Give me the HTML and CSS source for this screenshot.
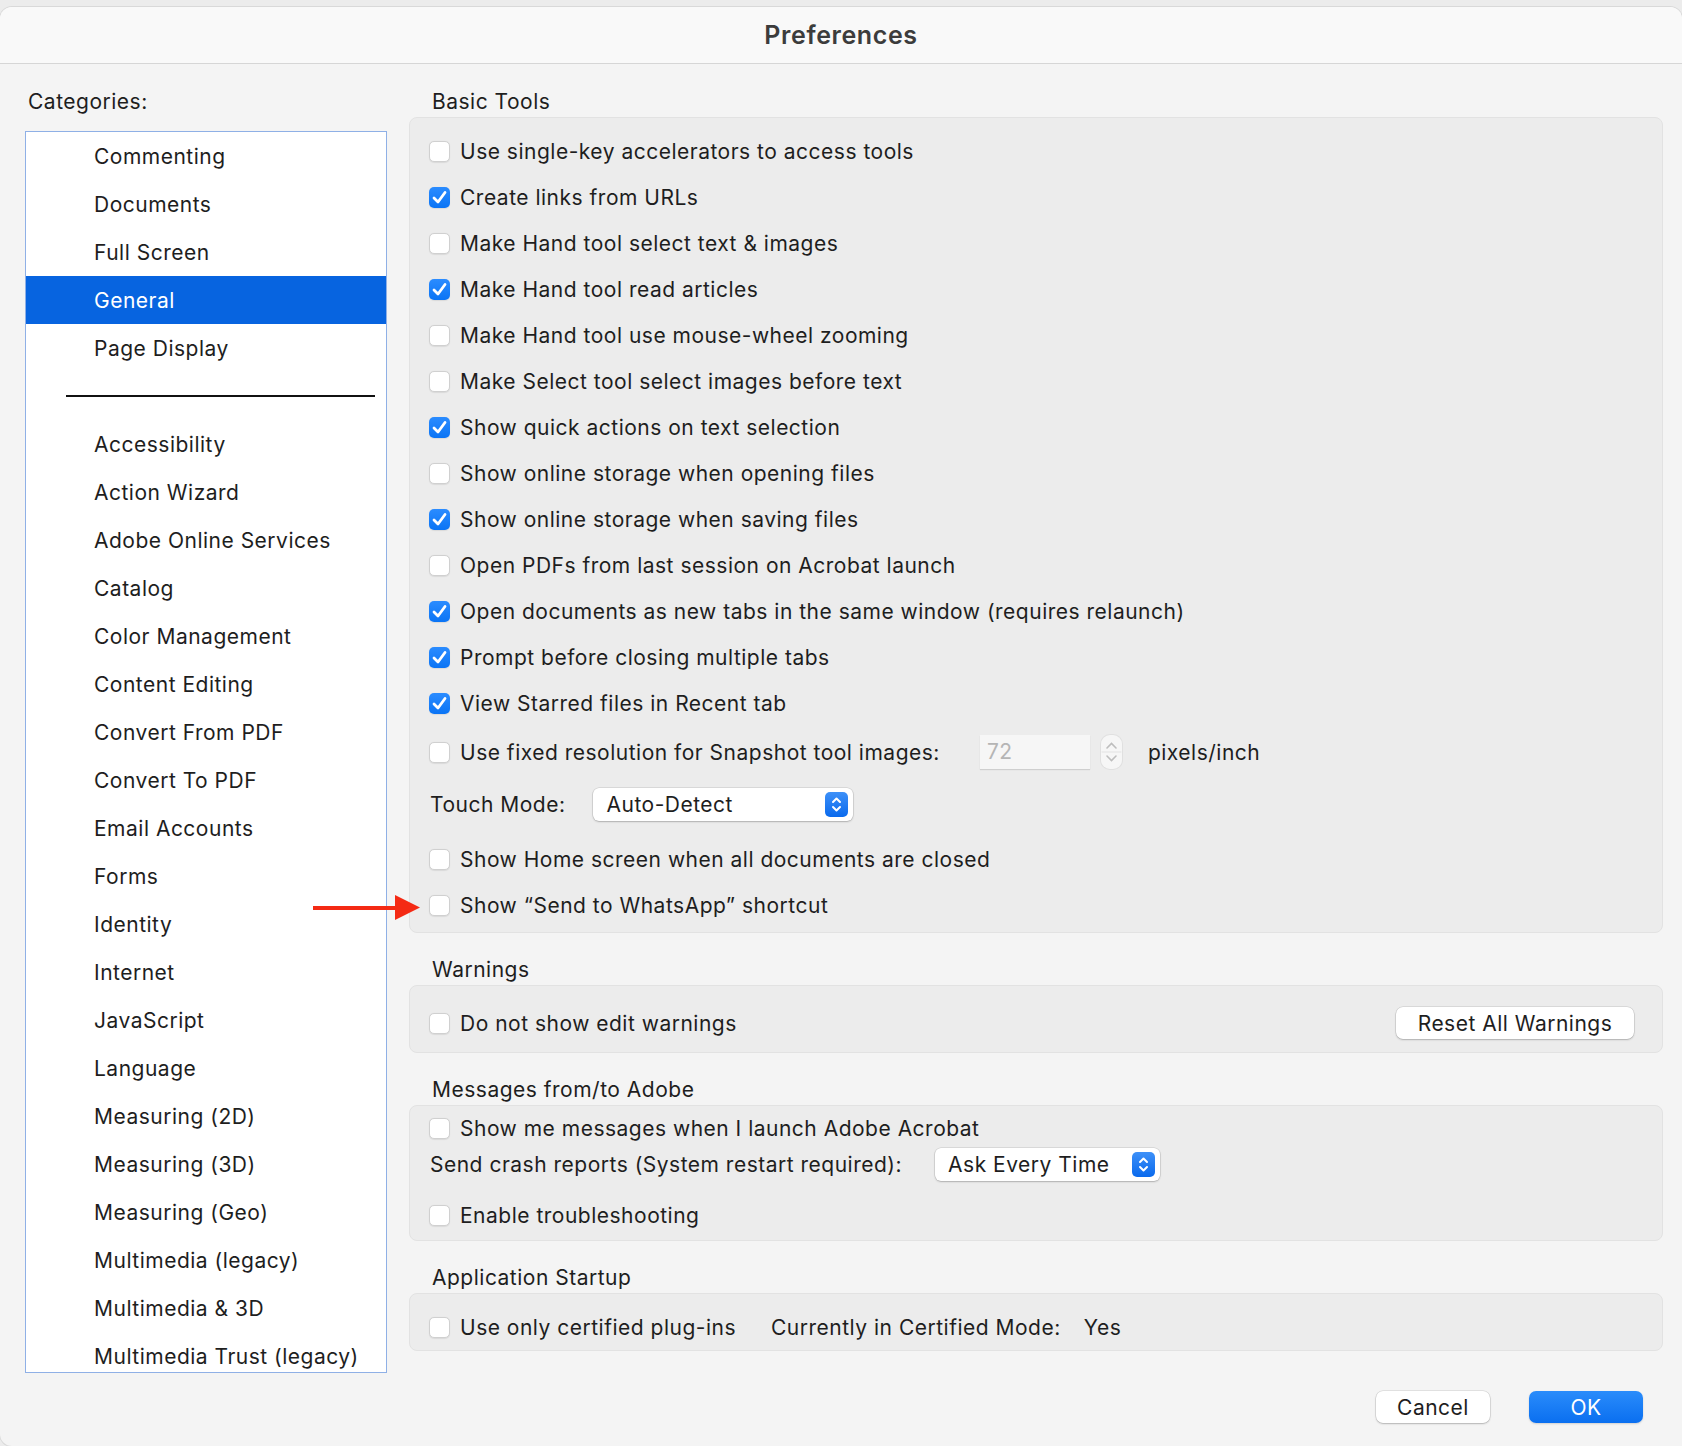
FILE: index.html
```html
<!DOCTYPE html>
<html lang="en">
  <head>
    <meta charset="UTF-8" />
    <title>Preferences</title>
    <link rel="stylesheet" href="styles.css">
  </head>
  <body>
    <div class="window">
      <div class="titlebar">Preferences</div>

      <div class="content">
        <div class="categories">
          <div class="label">Categories:</div>
          <ul class="list">
            <li>Commenting</li>
            <li>Documents</li>
            <li>Full Screen</li>
            <li class="selected">General</li>
            <li>Page Display</li>
            <li class="separator"></li>
            <li>Accessibility</li>
            <li>Action Wizard</li>
            <li>Adobe Online Services</li>
            <li>Catalog</li>
            <li>Color Management</li>
            <li>Content Editing</li>
            <li>Convert From PDF</li>
            <li>Convert To PDF</li>
            <li>Email Accounts</li>
            <li>Forms</li>
            <li>Identity</li>
            <li>Internet</li>
            <li>JavaScript</li>
            <li>Language</li>
            <li>Measuring (2D)</li>
            <li>Measuring (3D)</li>
            <li>Measuring (Geo)</li>
            <li>Multimedia (legacy)</li>
            <li>Multimedia &amp; 3D</li>
            <li>Multimedia Trust (legacy)</li>
          </ul>
        </div>

        <div class="settings">
          <div class="label section-label">Basic Tools</div>
          <div class="group basic">
            <div class="row"><span class="check"></span>Use single-key accelerators to access tools</div>
            <div class="row"><span class="check on"><svg viewBox="0 0 21 21"><path d="M5 11 L9 15 L16 5.5" /></svg></span>Create links from URLs</div>
            <div class="row"><span class="check"></span>Make Hand tool select text &amp; images</div>
            <div class="row"><span class="check on"><svg viewBox="0 0 21 21"><path d="M5 11 L9 15 L16 5.5" /></svg></span>Make Hand tool read articles</div>
            <div class="row"><span class="check"></span>Make Hand tool use mouse-wheel zooming</div>
            <div class="row"><span class="check"></span>Make Select tool select images before text</div>
            <div class="row"><span class="check on"><svg viewBox="0 0 21 21"><path d="M5 11 L9 15 L16 5.5" /></svg></span>Show quick actions on text selection</div>
            <div class="row"><span class="check"></span>Show online storage when opening files</div>
            <div class="row"><span class="check on"><svg viewBox="0 0 21 21"><path d="M5 11 L9 15 L16 5.5" /></svg></span>Show online storage when saving files</div>
            <div class="row"><span class="check"></span>Open PDFs from last session on Acrobat launch</div>
            <div class="row"><span class="check on"><svg viewBox="0 0 21 21"><path d="M5 11 L9 15 L16 5.5" /></svg></span>Open documents as new tabs in the same window (requires relaunch)</div>
            <div class="row"><span class="check on"><svg viewBox="0 0 21 21"><path d="M5 11 L9 15 L16 5.5" /></svg></span>Prompt before closing multiple tabs</div>
            <div class="row"><span class="check on"><svg viewBox="0 0 21 21"><path d="M5 11 L9 15 L16 5.5" /></svg></span>View Starred files in Recent tab</div>
            <div class="row tall">
              <span class="check"></span>Use fixed resolution for Snapshot tool images:
              <span class="number">72</span>
              <span class="spinner">
                <svg viewBox="0 0 21 34"><path d="M6 13 L10.5 8.5 L15 13" /><path d="M6 21 L10.5 25.5 L15 21" /><line x1="1" y1="17" x2="20" y2="17" /></svg>
              </span>
              <span class="unit">pixels/inch</span>
            </div>
            <div class="row tall touch">
              <span class="field-label">Touch Mode:</span>
              <span class="select touch-select">Auto-Detect
                <span class="arrows"><svg viewBox="0 0 23 25"><path d="M8 10 L11.5 6.5 L15 10" /><path d="M8 15 L11.5 18.5 L15 15" /></svg></span>
              </span>
            </div>
            <div class="row"><span class="check"></span>Show Home screen when all documents are closed</div>
            <div class="row"><span class="check"></span>Show “Send to WhatsApp” shortcut</div>
          </div>

          <div class="label section-label">Warnings</div>
          <div class="group warnings">
            <div class="row">
              <span class="check"></span>Do not show edit warnings
              <span class="button reset">Reset All Warnings</span>
            </div>
          </div>

          <div class="label section-label">Messages from/to Adobe</div>
          <div class="group messages">
            <div class="row short"><span class="check"></span>Show me messages when I launch Adobe Acrobat</div>
            <div class="row crash">
              <span class="field-label">Send crash reports (System restart required):</span>
              <span class="select crash-select">Ask Every Time
                <span class="arrows"><svg viewBox="0 0 23 25"><path d="M8 10 L11.5 6.5 L15 10" /><path d="M8 15 L11.5 18.5 L15 15" /></svg></span>
              </span>
            </div>
            <div class="row spaced"><span class="check"></span>Enable troubleshooting</div>
          </div>

          <div class="label section-label">Application Startup</div>
          <div class="group startup">
            <div class="row">
              <span class="check"></span>Use only certified plug-ins
              <span class="mode">Currently in Certified Mode:</span>
              <span class="mode-value">Yes</span>
            </div>
          </div>
        </div>
      </div>

      <div class="footer">
        <span class="button">Cancel</span>
        <span class="button primary">OK</span>
      </div>

      <!-- annotation arrow pointing at the WhatsApp option -->
      <svg class="pointer" viewBox="0 0 112 28">
        <line x1="3" y1="15" x2="88" y2="15" />
        <polygon points="85,2 110,14.5 85,27" />
      </svg>
    </div>
  </body>
</html>
```

FILE: styles.css
```css
* {
  box-sizing: border-box;
}

body {
  margin: 0;
  background-color: #ececec;
  font-family: Inter, "Noto Sans", sans-serif;
  font-size: 21px;
  letter-spacing: 0.5px;
  color: #1e1e1e;
}

.window {
  position: relative;
  margin-top: 7px;
  height: 1439px;
  background-color: #f4f4f4;
  border-radius: 12px 12px 0 12px;
  box-shadow: 0 0 0 1px #d9d9d9;
  overflow: hidden;
}

.titlebar {
  height: 57px;
  background-color: #f9f9f9;
  border-bottom: 1px solid #d6d6d6;
  display: flex;
  align-items: center;
  justify-content: center;
  font-size: 25px;
  font-weight: 600;
  letter-spacing: 0.6px;
  color: #3c3c3c;
}

.content {
  display: flex;
  gap: 22px;
  padding: 26px 19px 0 25px;
}

.label {
  height: 24px;
  line-height: 24px;
}

/* left column */

.categories {
  width: 362px;
}

.categories .label {
  padding-left: 3px;
  margin-bottom: 17px;
}

.list {
  list-style: none;
  margin: 0;
  padding: 0;
  height: 1242px;
  background-color: #fff;
  border: 1px solid #8fb0e6;
  overflow: hidden;
}

.list li {
  height: 48px;
  padding-left: 68px;
  display: flex;
  align-items: center;
  white-space: nowrap;
}

.list li.selected {
  background-color: #0764e0;
  color: #fff;
}

.list li.separator {
  position: relative;
}

.list li.separator::after {
  content: "";
  position: absolute;
  left: 40px;
  top: 23px;
  width: 309px;
  height: 2px;
  background-color: #111;
}

/* right column */

.settings {
  flex: 1;
}

.section-label {
  padding-left: 23px;
  margin-bottom: 3px;
}

.group {
  background-color: #ececec;
  border: 1px solid #e2e2e2;
  border-radius: 8px;
  padding-left: 19px;
  margin-bottom: 25px;
}

.group.basic {
  padding-top: 10px;
  padding-bottom: 4px;
}

.group.warnings {
  padding-top: 14px;
  padding-bottom: 6px;
  padding-right: 28px;
}

.group.messages {
  padding-top: 2px;
  padding-bottom: 2px;
}

.group.startup {
  padding-top: 10px;
}

.row {
  height: 46px;
  display: flex;
  align-items: center;
  white-space: nowrap;
}

.row.tall {
  height: 52px;
}

.row.touch {
  margin-bottom: 6px;
}

.row.short {
  height: 40px;
}

.row.crash {
  height: 32px;
}

.row.spaced {
  margin-top: 12px;
}

.check {
  width: 21px;
  height: 21px;
  flex-shrink: 0;
  margin-right: 10px;
  background-color: #fff;
  border: 1px solid #d0d0d0;
  border-radius: 5px;
  box-shadow: 0 0.5px 1px rgba(0, 0, 0, 0.08);
}

.check.on {
  background: linear-gradient(#2b8cff, #0a74f5);
  border: none;
}

.check svg {
  display: block;
  width: 21px;
  height: 21px;
}

.check svg path {
  fill: none;
  stroke: #fff;
  stroke-width: 2.8;
  stroke-linecap: round;
  stroke-linejoin: round;
}

.number {
  width: 110px;
  height: 34px;
  margin-left: 40px;
  padding-left: 7px;
  line-height: 34px;
  color: #b5b5b5;
  background-color: #f6f6f6;
  box-shadow: 0 1px 1px rgba(0, 0, 0, 0.12);
}

.spinner {
  width: 21px;
  height: 34px;
  margin-left: 11px;
  border-radius: 9px;
  background-color: #f6f6f6;
  box-shadow: 0 0 0 1px #e0e0e0;
}

.spinner svg {
  display: block;
  width: 21px;
  height: 34px;
}

.spinner path,
.spinner line {
  fill: none;
  stroke: #bdbdbd;
  stroke-width: 1.6;
  stroke-linecap: round;
}

.spinner line {
  stroke: #e2e2e2;
  stroke-width: 1;
}

.unit {
  margin-left: 26px;
}

.field-label {
  padding-left: 1px;
}

.select {
  position: relative;
  display: flex;
  align-items: center;
  height: 33px;
  padding-left: 13px;
  background-color: #fff;
  border-radius: 6px;
  box-shadow: 0 0 0 0.5px rgba(0, 0, 0, 0.15), 0 1px 2px rgba(0, 0, 0, 0.2);
}

.touch-select {
  width: 260px;
  margin-left: 28px;
}

.crash-select {
  width: 225px;
  margin-left: 33px;
}

.arrows {
  position: absolute;
  right: 5px;
  top: 4px;
  width: 23px;
  height: 25px;
  border-radius: 5px;
  background: linear-gradient(#3d90f8, #0a6aed);
}

.arrows svg {
  display: block;
  width: 23px;
  height: 25px;
}

.arrows path {
  fill: none;
  stroke: #fff;
  stroke-width: 2;
  stroke-linecap: round;
  stroke-linejoin: round;
}

.button {
  display: inline-flex;
  align-items: center;
  justify-content: center;
  height: 32px;
  background-color: #fff;
  border-radius: 7px;
  box-shadow: 0 0 0 0.5px rgba(0, 0, 0, 0.15), 0 1px 2px rgba(0, 0, 0, 0.2);
}

.button.reset {
  width: 238px;
  margin-left: auto;
}

.mode {
  margin-left: 35px;
}

.mode-value {
  margin-left: 23px;
}

.footer {
  display: flex;
  justify-content: flex-end;
  gap: 39px;
  padding: 15px 39px 0 0;
}

.footer .button {
  width: 114px;
}

.button.primary {
  color: #fff;
  background: linear-gradient(#2a8cfb, #0a6ff0);
  box-shadow: 0 1px 2px rgba(0, 0, 0, 0.15);
}

.pointer {
  position: absolute;
  left: 310px;
  top: 886px;
  width: 112px;
  height: 28px;
}

.pointer line {
  stroke: #f42a14;
  stroke-width: 4;
}

.pointer polygon {
  fill: #f42a14;
}
```
